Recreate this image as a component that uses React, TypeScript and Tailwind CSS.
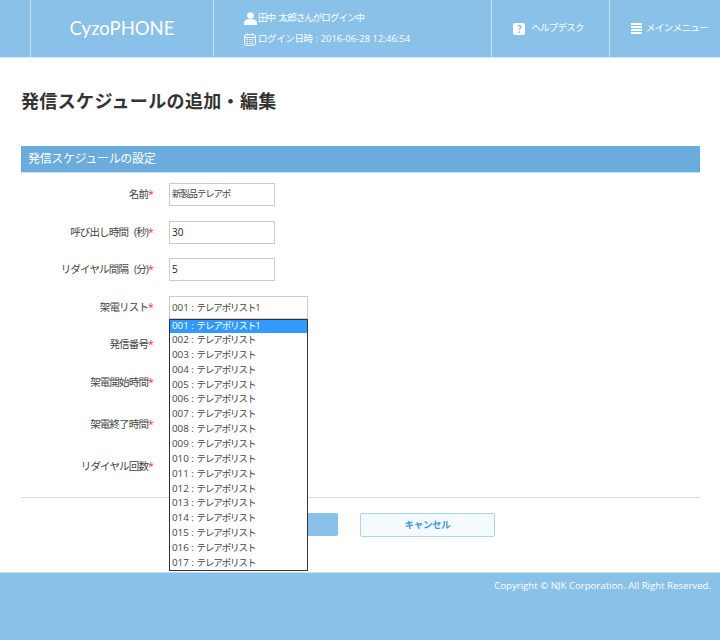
import React from "react";

const font = { fontFamily: '"Open Sans", "Noto Sans CJK JP", sans-serif' };

const listItems = [
  { no: "001", name: "テレアポリスト1" },
  ...Array.from({ length: 16 }, (_, i) => ({ no: String(i + 2).padStart(3, "0"), name: "テレアポリスト" })),
];

const Label: React.FC<{ text: string }> = ({ text }) => (
  <div className="w-[132px] text-right text-[10.5px] tracking-[-0.85px] [word-spacing:4px] text-[#444]">
    {text}
    <span className="text-red-500">*</span>
  </div>
);

const ListText: React.FC<{ no: string; name: string }> = ({ no, name }) => (
  <div className="flex items-center whitespace-pre h-[13px]">
    <span className="text-[9.8px] leading-[13px]">{no} : </span>
    <span className="text-[9.5px] leading-[13px] tracking-[-1.1px]">{name}</span>
  </div>
);

const UserIcon = () => (
  <svg width="13" height="13" viewBox="0 0 13 13" fill="white">
    <circle cx="6.5" cy="3.5" r="3.3" />
    <path d="M0 13v-2c0-2.2 2-3.6 4-3.8h5c2 .2 4 1.6 4 3.8v2z" />
  </svg>
);

const CalendarIcon = () => (
  <svg width="12" height="13" viewBox="0 0 12 13" fill="none" stroke="white">
    <rect x="0.7" y="1.7" width="10.6" height="10.6" rx="1.5" />
    <path d="M0.7 4.5h10.6M3.2 0v2.5M8.8 0v2.5" />
    <path d="M2.5 6.5h7M2.5 8.5h7M2.5 10.5h7" strokeDasharray="1.5 1" />
  </svg>
);

const HelpIcon = () => (
  <div className="w-[12px] h-[12px] rounded-[2px] bg-white text-[#89c1e8] text-[10px] font-bold leading-[12px] text-center">
    ?
  </div>
);

const MenuIcon = () => (
  <div className="flex flex-col gap-[1px] w-[11px]">
    <div className="h-[2px] bg-white" />
    <div className="h-[2px] bg-white" />
    <div className="h-[2px] bg-white" />
    <div className="h-[2px] bg-white" />
  </div>
);

export default function App() {
  return (
    <div className="w-[720px] h-[640px] flex flex-col bg-white overflow-hidden" style={font}>
      {/* Header */}
      <header className="h-[58px] flex bg-[#89c1e8] border-b border-[#d3e8f7] text-white">
        <div className="w-[31px] border-r border-[#c9e2f4]" />
        <div
          className="w-[183px] border-r border-[#c9e2f4] flex items-center justify-center text-[18.5px]"
          style={{ fontFamily: "Lato, sans-serif" }}
        >
          CyzoPHONE
        </div>
        <div className="w-[278px] border-r border-[#c9e2f4] pl-[30px] pt-[9px] text-[9.5px]">
          <div className="flex items-center gap-[1px] h-[18px]">
            <UserIcon />
            <span className="tracking-[-0.95px] [word-spacing:2px]">田中 太郎さんがログイン中</span>
          </div>
          <div className="flex items-center gap-[2px] h-[18px] mt-[3px]">
            <CalendarIcon />
            <span className="tracking-[-0.4px]">ログイン日時</span>
            <span className="ml-[1px]">: 2016-06-28 12:46:54</span>
          </div>
        </div>
        <div className="w-[118px] border-r border-[#c9e2f4] pr-[4px] flex items-center justify-center gap-[6px] text-[9.5px]">
          <HelpIcon />
          <span className="tracking-[-0.8px]">ヘルプデスク</span>
        </div>
        <div className="flex-1 flex items-center justify-center gap-[4px] pl-[9px] text-[9.5px]">
          <MenuIcon />
          <span className="tracking-[-0.6px]">メインメニュー</span>
        </div>
      </header>

      {/* Main */}
      <main className="h-[514px] pl-[21px] pr-[20px] pt-[29px]">
        <h1 className="text-[18px] font-bold text-[#333] leading-[28px] tracking-[0.35px]">
          発信スケジュールの追加・編集
        </h1>

        <div className="mt-[31px] h-[27px] bg-[#6aacdb] border-b border-[#c9e2f4] pl-[7px] flex items-center text-[12px] tracking-[-0.35px] text-white">
          発信スケジュールの設定
        </div>

        <div className="mt-[10px] flex flex-col">
          <div className="h-[23px] flex items-center gap-[16px]">
            <Label text="名前" />
            <div className="w-[106px] h-[23px] border border-[#ccc] pl-[2px] flex items-center text-[9.5px] tracking-[-1.2px] text-[#444]">
              新製品テレアポ
            </div>
          </div>
          <div className="mt-[15px] h-[23px] flex items-center gap-[16px]">
            <Label text="呼び出し時間 (秒)" />
            <div className="w-[106px] h-[23px] border border-[#ccc] pl-[2px] flex items-center text-[10px] text-[#222]">
              30
            </div>
          </div>
          <div className="mt-[14px] h-[23px] flex items-center gap-[16px]">
            <Label text="リダイヤル間隔 (分)" />
            <div className="w-[106px] h-[23px] border border-[#ccc] pl-[2px] flex items-center text-[10px] text-[#222]">
              5
            </div>
          </div>
          <div className="mt-[15px] h-[23px] flex items-center gap-[16px]">
            <Label text="架電リスト" />
            <div className="relative w-[139px] h-[23px] border border-[#ccc] pl-[2px] flex items-center text-[#444]">
              <ListText no={listItems[0].no} name={listItems[0].name} />
              {/* open select list */}
              <div className="absolute left-[-1px] top-[22px] w-[139px] h-[252px] z-10 bg-white border border-[#333]">
                {listItems.map((item, i) => (
                  <div
                    key={item.no}
                    className={`pl-[2px] pb-[2px] flex items-center overflow-visible ${
                      i === 0 ? "h-[13px] bg-[#3399ff] text-white" : "h-[14.87px] text-[#444]"
                    }`}
                  >
                    <ListText no={item.no} name={item.name} />
                  </div>
                ))}
              </div>
            </div>
          </div>
          <div className="mt-[14px] h-[23px] flex items-center">
            <Label text="発信番号" />
          </div>
          <div className="mt-[15px] h-[23px] flex items-center">
            <Label text="架電開始時間" />
          </div>
          <div className="mt-[19px] h-[23px] flex items-center">
            <Label text="架電終了時間" />
          </div>
          <div className="mt-[19px] h-[23px] flex items-center">
            <Label text="リダイヤル回数" />
          </div>
        </div>

        <div className="mt-[19px] border-t border-[#ddd]" />

        <div className="mt-[15px] flex justify-end pr-[205px] gap-[22px]">
          <div className="w-[100px] h-[23px] rounded-[2px] bg-[#89c1e8]" />
          <div className="w-[135px] h-[24px] rounded-[2px] bg-[#f5fafd] border border-[#a9d3ef] flex items-center justify-center text-[9.5px] font-bold tracking-[-0.3px] text-[#3f9bdc]">
            キャンセル
          </div>
        </div>
      </main>

      {/* Footer */}
      <footer className="flex-1 bg-[#89c1e8] border-t border-[#c5dff1] pt-[6px] pr-[9px] text-right text-[9.65px] text-white">
        Copyright © NJK Corporation. All Right Reserved.
      </footer>
    </div>
  );
}
